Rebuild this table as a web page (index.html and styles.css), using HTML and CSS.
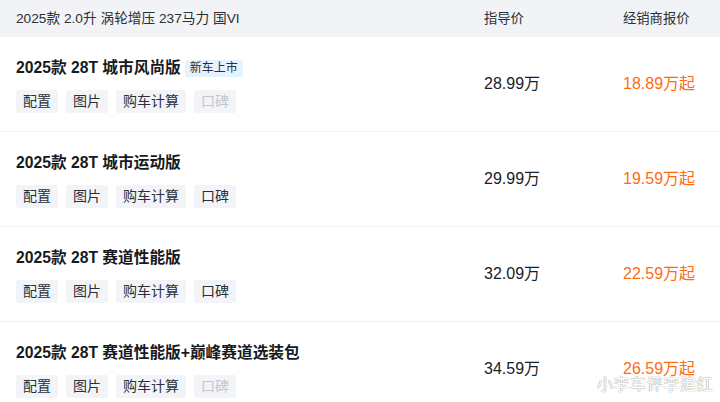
FILE: index.html
```html
<!DOCTYPE html>
<html lang="zh">
<head>
<meta charset="utf-8">
<link rel="stylesheet" href="styles.css">
</head>
<body>
<div class="table">
  <div class="head">
    <div class="c1 spec">2025款 2.0升 涡轮增压 237马力 国VI</div>
    <div class="c2">指导价</div>
    <div class="c3">经销商报价</div>
  </div>
  <div class="row">
    <div class="c1">
      <div class="title">2025款 28T 城市风尚版<span class="badge">新车上市</span></div>
      <div class="btns"><span class="btn">配置</span><span class="btn">图片</span><span class="btn">购车计算</span><span class="btn off">口碑</span></div>
    </div>
    <div class="c2 price">28.99万</div>
    <div class="c3 deal">18.89万起</div>
  </div>
  <div class="row">
    <div class="c1">
      <div class="title">2025款 28T 城市运动版</div>
      <div class="btns"><span class="btn">配置</span><span class="btn">图片</span><span class="btn">购车计算</span><span class="btn">口碑</span></div>
    </div>
    <div class="c2 price">29.99万</div>
    <div class="c3 deal">19.59万起</div>
  </div>
  <div class="row">
    <div class="c1">
      <div class="title">2025款 28T 赛道性能版</div>
      <div class="btns"><span class="btn">配置</span><span class="btn">图片</span><span class="btn">购车计算</span><span class="btn">口碑</span></div>
    </div>
    <div class="c2 price">32.09万</div>
    <div class="c3 deal">22.59万起</div>
  </div>
  <div class="row">
    <div class="c1">
      <div class="title">2025款 28T 赛道性能版+巅峰赛道选装包</div>
      <div class="btns"><span class="btn">配置</span><span class="btn">图片</span><span class="btn">购车计算</span><span class="btn off">口碑</span></div>
    </div>
    <div class="c2 price">34.59万</div>
    <div class="c3 deal">26.59万起</div>
  </div>
  <div class="watermark">小李车评李建红</div>
</div>
</body>
</html>
```
FILE: styles.css
```css
* { box-sizing: border-box; }
html, body { margin: 0; padding: 0; background: #fff; }
body {
  font-family: "Liberation Sans", "Noto Sans CJK SC", sans-serif;
  color: #1c2029;
  width: 720px;
  height: 402px;
  overflow: hidden;
}
.table { position: relative; }
.head, .row {
  display: grid;
  grid-template-columns: 468px 139px 1fr;
  padding-left: 16px;
}
.head {
  height: 37px;
  background: #f2f3f6;
  align-items: center;
  font-size: 13.3px;
  line-height: 20px;
  color: #2b2f36;
}
.head .spec { font-size: 13.7px; }
.row {
  height: 95px;
  border-bottom: 1px solid #f0f1f3;
  align-items: center;
}
.row .c1 {
  align-self: start;
  padding-top: 20px;
  display: flex;
  flex-direction: column;
  gap: 11px;
}
.title {
  font-size: 15.7px;
  font-weight: bold;
  line-height: 22px;
  color: #171a21;
  display: flex;
  align-items: center;
}
.badge {
  margin-left: 4px;
  font-size: 12px;
  font-weight: normal;
  line-height: 17px;
  padding: 0 5px;
  background: #e6f2ff;
  color: #2b2f36;
  border-radius: 2px;
}
.btns { display: flex; gap: 8px; }
.btn {
  font-size: 14px;
  line-height: 23px;
  height: 23px;
  padding: 0 7px;
  background: #f3f4f7;
  color: #2b2f36;
  border-radius: 2px;
}
.btn.off { color: #c3c6cc; }
.price { font-size: 16px; line-height: 16px; color: #1c2029; }
.deal { font-size: 16px; line-height: 16px; color: #ff6b12; }
.watermark {
  position: absolute;
  left: 597px;
  top: 377px;
  font-size: 16px;
  line-height: 16px;
  letter-spacing: 0.6px;
  color: #fff;
  text-shadow: 0 0 1px #9a9a9a, 0 0 1px #9a9a9a;
}
```
